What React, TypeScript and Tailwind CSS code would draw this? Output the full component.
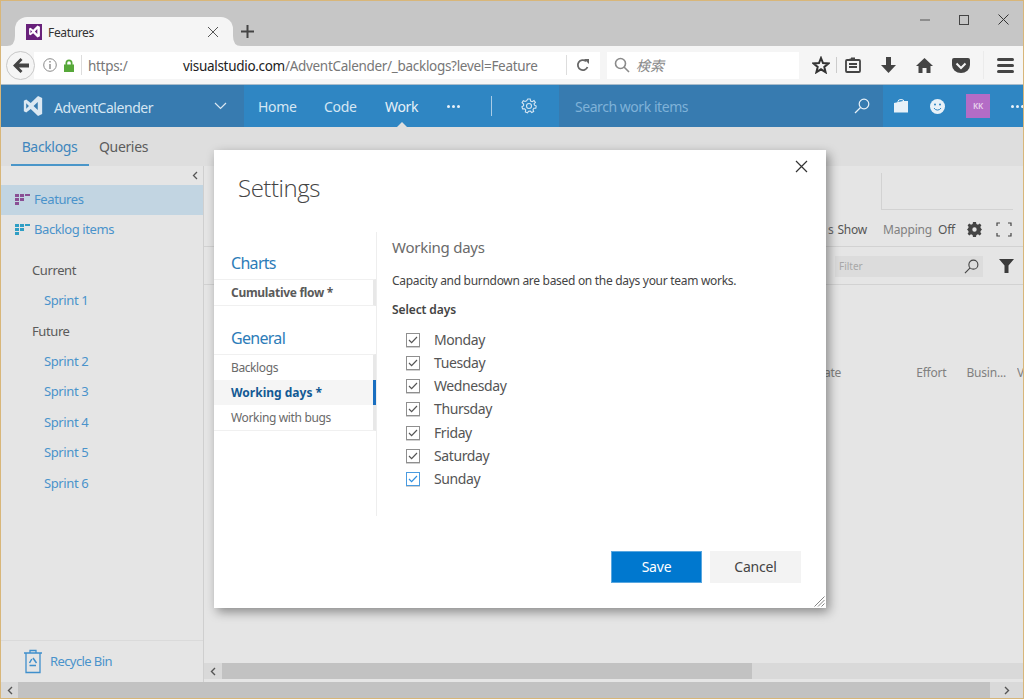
import React from "react";

const VsLogo = ({ size, color }: { size: number; color: string }) => (
  <svg width={size} height={size} viewBox="0 0 24 24" fill={color} className="shrink-0">
    <path d="M17.5 1 L22 3.2 V20.8 L17.5 23 L9.5 15.2 L4.6 19 L2 17.7 V6.3 L4.6 5 L9.5 8.8 Z M17.2 7.6 L12.6 12 L17.2 16.4 Z M4.6 9 V15 L7.6 12 Z" fillRule="evenodd" />
  </svg>
);

const GridIcon = ({ c1 }: { c1: string }) => (
  <svg width="15" height="12" viewBox="0 0 15 12" fill={c1} className="shrink-0">
    <rect x="0" y="0" width="4" height="3" />
    <rect x="5" y="0" width="4" height="3" />
    <rect x="10" y="0" width="5" height="2" />
    <rect x="0" y="4" width="4" height="3" />
    <rect x="5" y="4" width="4" height="3" />
    <rect x="0" y="8" width="4" height="3" />
  </svg>
);

const Mag = ({ size, color }: { size: number; color: string }) => (
  <svg width={size} height={size} viewBox="0 0 16 16" fill="none" stroke={color} strokeWidth="1.2">
    <circle cx="10" cy="6" r="4.8" />
    <path d="M6.5 9.5 L1 15" />
  </svg>
);

const Check = ({ focus }: { focus?: boolean }) => (
  <span className={`flex h-[14px] w-[14px] shrink-0 items-center justify-center border ${focus ? "border-[#4a9be0]" : "border-[#8f8f8f]"} shadow-[0_1px_0_#d0d0d0]`}>
    <svg width="10" height="8" viewBox="0 0 10 8" fill="none" stroke={focus ? "#2f8fe0" : "#555555"} strokeWidth="1.2">
      <path d="M1 4 L3.6 6.6 L9 1" />
    </svg>
  </span>
);

const days = ["Monday", "Tuesday", "Wednesday", "Thursday", "Friday", "Saturday", "Sunday"];
const sprints = ["Sprint 2", "Sprint 3", "Sprint 4", "Sprint 5", "Sprint 6"];

export default function App() {
  return (
    <div
      className="relative flex h-[699px] w-[1024px] flex-col overflow-hidden border border-[#d8b679] bg-[#e5e5e5] text-[#555555]"
      style={{ fontFamily: '"Noto Sans", "Noto Sans CJK JP", sans-serif' }}
    >
      {/* Browser title strip */}
      <div className="flex h-[45px] shrink-0 items-end bg-[#c6c6c6] pl-[14px]">
        <div className="relative flex h-[29px] w-[218px] items-center rounded-t-[12px] bg-[#f5f5f5] pl-[11px] pr-[14px]">
          <svg className="absolute -left-[8px] bottom-0" width="8" height="10" viewBox="0 0 8 10" fill="#f5f5f5">
            <path d="M0 10 Q8 10 8 0 V10 Z" />
          </svg>
          <svg className="absolute -right-[8px] bottom-0" width="8" height="10" viewBox="0 0 8 10" fill="#f5f5f5">
            <path d="M8 10 Q0 10 0 0 V10 Z" />
          </svg>
          <span className="flex h-[16px] w-[16px] items-center justify-center bg-[#68217a]">
            <VsLogo size={13} color="#ffffff" />
          </span>
          <span className="ml-[6px] flex-1 pt-[2px] text-[12px] tracking-[-0.35px] text-[#333333]">Features</span>
          <svg width="12" height="12" viewBox="0 0 12 12" stroke="#555555" strokeWidth="1">
            <path d="M1 1 L11 11 M11 1 L1 11" />
          </svg>
        </div>
        <svg className="mb-[8px] ml-[8px]" width="13" height="13" viewBox="0 0 13 13" stroke="#444444" strokeWidth="2">
          <path d="M6.5 0 V13 M0 6.5 H13" />
        </svg>
        <div className="mb-[21px] ml-auto flex items-center gap-[29px] pr-[14px]">
          <svg width="10" height="10" viewBox="0 0 10 10" stroke="#555555" strokeWidth="1"><path d="M0 5 H10" /></svg>
          <svg width="10" height="10" viewBox="0 0 10 10" fill="none" stroke="#444444" strokeWidth="1"><rect x="0.5" y="0.5" width="9" height="9" /></svg>
          <svg width="11" height="11" viewBox="0 0 11 11" stroke="#333333" strokeWidth="1"><path d="M0.5 0.5 L10.5 10.5 M10.5 0.5 L0.5 10.5" /></svg>
        </div>
      </div>

      {/* Browser toolbar */}
      <div className="flex h-[39px] shrink-0 items-center border-b border-[#a9bccb] bg-[#f5f5f5] pl-[5px]">
        <div className="z-10 flex h-[29px] w-[29px] shrink-0 items-center justify-center rounded-full border border-[#c8c8c8] bg-[#f5f5f5]">
          <svg width="16" height="15" viewBox="0 0 16 15" fill="#444444">
            <path d="M7.5 0 L9.5 2 L6 5.5 H16 V9.5 H6 L9.5 13 L7.5 15 L0 7.5 Z" />
          </svg>
        </div>
        <div className="-ml-[1px] flex h-[27px] w-[566px] shrink-0 items-center overflow-hidden bg-white text-[13.5px] tracking-[-0.3px]">
          <svg className="ml-[9px] shrink-0" width="14" height="14" viewBox="0 0 14 14" fill="none" stroke="#8a8a8a" strokeWidth="1">
            <circle cx="7" cy="7" r="6.3" />
            <path d="M7 6 V11 M7 3 V4.6" strokeWidth="1.4" />
          </svg>
          <svg className="ml-[6px] shrink-0" width="12" height="13" viewBox="0 0 12 13" fill="#57a83a">
            <path d="M1 5.5 H2.5 V4 A3.5 3.5 0 0 1 9.5 4 V5.5 H11 V13 H1 Z M4.2 5.5 H7.8 V4 A1.8 1.8 0 0 0 4.2 4 Z" fillRule="evenodd" />
          </svg>
          <span className="ml-[6px] h-[20px] w-px shrink-0 bg-[#dddddd]" />
          <span className="ml-[6px] w-[95px] shrink-0 pt-[2px] text-[#777777]">https:/</span>
          <span className="shrink-0 whitespace-nowrap pt-[2px] text-[#222222]">visualstudio.com</span>
          <span className="w-[257px] shrink-0 overflow-hidden whitespace-nowrap pt-[2px] text-[#777777]">/AdventCalender/_backlogs?level=Feature</span>
          <span className="ml-[24px] h-[20px] w-px shrink-0 bg-[#dddddd]" />
          <svg className="ml-[9px] shrink-0" width="14" height="14" viewBox="0 0 14 14" fill="none" stroke="#666666" strokeWidth="1.8">
            <path d="M11.5 9 A5 5 0 1 1 10 3.2" />
            <path d="M8 1 H13 V6 Z" fill="#666666" stroke="none" />
          </svg>
        </div>
        <div className="ml-[7px] flex h-[27px] w-[192px] shrink-0 items-center bg-white pl-[7px]">
          <svg width="16" height="16" viewBox="0 0 16 16" fill="none" stroke="#8a8a8a" strokeWidth="1.6">
            <circle cx="6.5" cy="6.5" r="5" />
            <path d="M10 10 L15 15" />
          </svg>
          <span className="ml-[6px] pt-[1px] text-[14px] italic text-[#888888]">検索</span>
        </div>
        <div className="ml-[13px] flex items-center">
          <svg width="18" height="18" viewBox="0 0 18 18" fill="none" stroke="#333333" strokeWidth="2">
            <path d="M9 2 L11 7 L16.5 7.4 L12.3 10.9 L13.6 16.2 L9 13.3 L4.4 16.2 L5.7 10.9 L1.5 7.4 L7 7 Z" />
          </svg>
          <span className="ml-[6px] h-[16px] w-px bg-[#cccccc]" />
          <svg className="ml-[8px]" width="16" height="16" viewBox="0 0 16 16" fill="none" stroke="#444444" strokeWidth="1.8">
            <rect x="1" y="3" width="14" height="12" rx="1" />
            <path d="M4 7 H12 M4 10 H12 M5.5 3 V1.5 M6 1.5 H10" />
          </svg>
          <svg className="ml-[20px]" width="15" height="16" viewBox="0 0 15 16" fill="#444444">
            <path d="M5 0 H10 V8 H15 L7.5 16 L0 8 H5 Z" />
          </svg>
          <svg className="ml-[20px]" width="17" height="15" viewBox="0 0 17 15" fill="#444444">
            <path d="M8.5 0 L17 8 H14.5 V15 H10.5 V10 H6.5 V15 H2.5 V8 H0 Z" />
          </svg>
          <svg className="ml-[19px]" width="18" height="15" viewBox="0 0 18 15" fill="#444444">
            <path d="M2 0 H16 A2 2 0 0 1 18 2 V7 A9 8 0 0 1 0 7 V2 A2 2 0 0 1 2 0 Z" />
            <path d="M4.5 5.5 L9 10 L13.5 5.5" fill="none" stroke="#f5f5f5" strokeWidth="2" />
          </svg>
          <span className="ml-[13px] h-[28px] w-px bg-[#ebebeb]" />
          <div className="ml-[13px] flex w-[17px] flex-col gap-[3px]">
            <span className="h-[3px] rounded-full bg-[#444444]" />
            <span className="h-[3px] rounded-full bg-[#444444]" />
            <span className="h-[3px] rounded-full bg-[#444444]" />
          </div>
        </div>
      </div>

      {/* App nav */}
      <div className="flex h-[42px] shrink-0 items-center bg-[#2f86c3] text-[14px] tracking-[-0.3px] text-[#d5e6f3]">
        <div className="flex h-full w-[243px] shrink-0 items-center bg-[#377bb0] pl-[21px] pr-[17px]">
          <VsLogo size={22} color="#dbe8f2" />
          <span className="ml-[10px] flex-1 pt-[2px] text-[14px] tracking-[-0.45px]">AdventCalender</span>
          <svg width="13" height="8" viewBox="0 0 13 8" fill="none" stroke="#dbe8f2" strokeWidth="1.2"><path d="M1 1 L6.5 6.5 L12 1" /></svg>
        </div>
        <span className="ml-[14px] w-[38px] shrink-0 pt-[1px]">Home</span>
        <span className="ml-[28px] w-[33px] shrink-0 pt-[1px]">Code</span>
        <span className="relative ml-[28px] w-[34px] shrink-0 pt-[1px] text-[#e8f1f8]">
          Work
          <span className="absolute left-[12px] top-[27px] h-0 w-0 border-x-[5px] border-b-[5px] border-x-transparent border-b-[#dedede]" />
        </span>
        <span className="ml-[28px] flex w-[13px] shrink-0 gap-[2px]">
          <i className="h-[3px] w-[3px] rounded-full bg-[#e8f1f8]" />
          <i className="h-[3px] w-[3px] rounded-full bg-[#e8f1f8]" />
          <i className="h-[3px] w-[3px] rounded-full bg-[#e8f1f8]" />
        </span>
        <span className="ml-[31px] h-[20px] w-px shrink-0 bg-[#a9cce6]" />
        <svg className="ml-[29px] shrink-0" width="16" height="16" viewBox="0 0 16 16" fill="none" stroke="#d5e6f3" strokeWidth="1.1">
          <circle cx="8" cy="8" r="2.5" />
          <path d="M6.8 1 H9.2 L9.6 3 L11.2 3.7 L13 2.6 L14.4 4.4 L13 5.8 L13.5 7.2 L15.2 8 L14.8 10.2 L12.9 10.2 L12 11.7 L12.7 13.6 L10.7 14.6 L9.4 13.1 L7.6 13.2 L6.5 14.8 L4.3 13.9 L4.7 12 L3.6 10.8 L1.6 10.9 L0.9 8.7 L2.6 7.7 L2.6 6 L1.1 4.7 L2.3 2.8 L4.1 3.5 L5.6 2.8 Z" />
        </svg>
        <div className="ml-[22px] flex h-full w-[324px] shrink-0 items-center justify-between bg-[#377bb0] pl-[16px] pr-[13px]">
          <span className="pt-[1px] tracking-[-0.45px] text-[#7fb2d8]">Search work items</span>
          <Mag size={16} color="#e8f1f8" />
        </div>
        <svg className="ml-[11px] shrink-0" width="14" height="14" viewBox="0 0 14 14" fill="#e8f1f8">
          <path d="M0 4 L9 2 H14 V13.5 H0 Z" />
          <path d="M4 4 V2.5 A3 2 0 0 1 10 2.5 V4" fill="none" stroke="#e8f1f8" />
        </svg>
        <svg className="ml-[22px] shrink-0" width="15" height="15" viewBox="0 0 15 15">
          <circle cx="7.5" cy="7.5" r="7.5" fill="#e8f1f8" />
          <circle cx="5" cy="5.5" r="1" fill="#2f86c3" />
          <circle cx="10" cy="5.5" r="1" fill="#2f86c3" />
          <path d="M4 9 A4 4 0 0 0 11 9" fill="none" stroke="#2f86c3" />
        </svg>
        <span className="ml-[21px] flex h-[24px] w-[24px] shrink-0 items-center justify-center bg-[#b46cc6] text-[8px] font-semibold text-[#e8d5ec]">KK</span>
        <span className="ml-[21px] flex shrink-0 gap-[2px]">
          <i className="h-[3px] w-[3px] rounded-full bg-[#e8f1f8]" />
          <i className="h-[3px] w-[3px] rounded-full bg-[#e8f1f8]" />
          <i className="h-[3px] w-[3px] rounded-full bg-[#e8f1f8]" />
        </span>
      </div>

      {/* Sub nav */}
      <div className="flex h-[39px] shrink-0 items-stretch bg-[#dedede] pl-[10px] text-[14px] tracking-[-0.35px]">
        <span className="flex w-[78px] items-center justify-center border-b-[2px] border-[#4a96c9] pr-[1px] pt-[1px] text-[#3f86bd]">Backlogs</span>
        <span className="ml-[10px] flex items-center text-[#5c5c5c]">Queries</span>
      </div>

      {/* Main */}
      <div className="flex min-h-0 flex-1">
        <aside className="flex w-[203px] shrink-0 flex-col border-r border-[#cfcfcf] text-[13px] tracking-[-0.4px] text-[#4a93cb]">
          <div className="flex h-[19px] shrink-0 items-center justify-end pr-[5px]">
            <svg width="6" height="9" viewBox="0 0 6 9" fill="none" stroke="#555555" strokeWidth="1.3"><path d="M5 1 L1.5 4.5 L5 8" /></svg>
          </div>
          <div className="flex h-[30px] items-center gap-[4px] bg-[#c2d5e2] pl-[14px]">
            <GridIcon c1="#8a4f94" />
            <span>Features</span>
          </div>
          <div className="flex h-[30px] items-center gap-[4px] pl-[14px]">
            <GridIcon c1="#2f9ec4" />
            <span>Backlog items</span>
          </div>
          <div className="mt-[10px] flex flex-col pt-[1px]">
            <span className="flex h-[29.5px] items-center pl-[31px] text-[#5a5a5a]">Current</span>
            <span className="flex h-[30.5px] items-center pl-[43px]">Sprint 1</span>
            <span className="flex h-[30.5px] items-center pl-[31px] text-[#5a5a5a]">Future</span>
            {sprints.map((s) => (
              <span key={s} className="flex h-[30.4px] items-center pl-[43px]">{s}</span>
            ))}
          </div>
          <div className="mt-auto flex h-[42px] items-center border-t border-[#dadada] pl-[22px]">
            <svg width="20" height="25" viewBox="0 0 20 25" fill="none" stroke="#3f8fcc" strokeWidth="1.3">
              <path d="M1 4 H19 M7 4 V1.5 H13 V4 M3 4 V23.5 H17 V4" />
              <path d="M10 9 L13.5 14 M8.8 10 L6.5 14 M6.5 16.5 H13" strokeWidth="1.5" />
            </svg>
            <span className="ml-[7px] pt-[1px] tracking-[-0.6px]">Recycle Bin</span>
          </div>
        </aside>

        <section className="flex min-w-0 flex-1 flex-col">
          <div className="flex justify-end pr-[10px] pt-[7px]">
            <div className="h-[37px] w-[132px] border-b-[1px] border-l-[1px] border-[#d2d2d2]" />
          </div>
          <div className="flex h-[37px] items-center justify-end border-b border-[#d2d2d2] pr-[11px] pt-[3px] text-[12px] tracking-[-0.2px]">
            <span className="text-[#6a6a6a]">s</span>
            <span className="ml-[4px]">Show</span>
            <span className="ml-[16px] text-[#808080]">Mapping</span>
            <span className="ml-[6px]">Off</span>
            <svg className="ml-[12px]" width="15" height="15" viewBox="0 0 15 15" fill="#444444">
              <path d="M6 0 H9 L9.4 2 L11 2.7 L12.7 1.6 L14.4 3.3 L13.3 5 L14 6.6 L15 7.5 L14 8.4 L13.3 10 L14.4 11.7 L12.7 13.4 L11 12.3 L9.4 13 L9 15 H6 L5.6 13 L4 12.3 L2.3 13.4 L0.6 11.7 L1.7 10 L1 8.4 L0 7.5 L1 6.6 L1.7 5 L0.6 3.3 L2.3 1.6 L4 2.7 L5.6 2 Z M7.5 5.3 A2.2 2.2 0 1 0 7.5 9.7 A2.2 2.2 0 1 0 7.5 5.3 Z" fillRule="evenodd" />
            </svg>
            <svg className="ml-[14px]" width="16" height="15" viewBox="0 0 16 15" fill="none" stroke="#444444" strokeWidth="1.2">
              <path d="M1 4 V1 H4 M12 1 H15 V4 M15 11 V14 H12 M4 14 H1 V11" />
            </svg>
          </div>
          <div className="flex h-[38px] items-center justify-end border-b border-[#d2d2d2] pr-[9px] pt-[1px]">
            <div className="flex h-[21px] w-[148px] items-center justify-between bg-[#dcdcdc] pl-[4px] pr-[4px] text-[10px] text-[#a8a8a8]">
              <span>Filter</span>
              <Mag size={15} color="#444444" />
            </div>
            <svg className="ml-[16px]" width="15" height="14" viewBox="0 0 15 14" fill="#3a3a3a">
              <path d="M0 0 H15 L9.5 6.5 V14 H5.5 V6.5 Z" />
            </svg>
          </div>
          <div className="flex justify-end pt-[79px] text-[12px] tracking-[-0.2px] text-[#808080]">
            <span className="mr-[75px]">ate</span>
            <span className="mr-[20px]">Effort</span>
            <span className="mr-[11px]">Busin...</span>
            <span className="h-[17px] w-[6px] overflow-hidden">V</span>
          </div>
          <div className="mt-auto flex h-[16px] items-stretch bg-[#d9d9d9]">
            <span className="flex w-[18px] items-center justify-center">
              <svg width="6" height="9" viewBox="0 0 6 9" fill="none" stroke="#555555" strokeWidth="1.4"><path d="M5 1 L1.5 4.5 L5 8" /></svg>
            </span>
            <span className="w-[530px] bg-[#c2c2c2]" />
          </div>
          <div className="h-[3px] shrink-0" />
        </section>
      </div>

      {/* Window scrollbar */}
      <div className="flex h-[16px] shrink-0 items-stretch bg-[#d9d9d9]">
        <span className="flex w-[17px] items-center justify-center">
          <svg width="6" height="9" viewBox="0 0 6 9" fill="none" stroke="#555555" strokeWidth="1.4"><path d="M5 1 L1.5 4.5 L5 8" /></svg>
        </span>
        <span className="w-[972px] bg-[#c2c2c2]" />
        <span className="flex flex-1 items-center justify-center">
          <svg width="6" height="9" viewBox="0 0 6 9" fill="none" stroke="#555555" strokeWidth="1.4"><path d="M1 1 L4.5 4.5 L1 8" /></svg>
        </span>
      </div>

      {/* Dialog */}
      <div className="absolute left-[213px] top-[149px] flex h-[458px] w-[612px] flex-col bg-white shadow-[3px_4px_10px_rgba(0,0,0,0.4)]">
        <div className="flex items-start justify-between pl-[24px] pr-[18px]">
          <h1 className="pt-[20px] text-[24px] font-light leading-[36px] tracking-[-0.45px] text-[#444444]" style={{ fontFamily: '"Open Sans", sans-serif' }}>Settings</h1>
          <svg className="mt-[10px]" width="13" height="13" viewBox="0 0 13 13" stroke="#333333" strokeWidth="1.2">
            <path d="M1 1 L12 12 M12 1 L1 12" />
          </svg>
        </div>
        <div className="mt-[26px] flex h-[284px]">
          <nav className="w-[163px] shrink-0 border-r border-[#eeeeee] pt-[20px] text-[12px]">
            <h2 className="pl-[17px] text-[16px] leading-[22px] tracking-[-0.7px] text-[#2c7cb8]">Charts</h2>
            <div className="mt-[5px] flex h-[27px] items-center border-y border-[#f0f0f0] border-r-[3px] border-r-[#e8e8e8] pl-[17px] font-bold tracking-[-0.3px] text-[#5a5a5a]">Cumulative flow *</div>
            <h2 className="mt-[21px] pl-[17px] text-[16px] leading-[22px] tracking-[-0.7px] text-[#2c7cb8]">General</h2>
            <div className="mt-[5px] flex h-[26px] items-center border-t border-[#f0f0f0] border-r-[3px] border-r-[#e8e8e8] pl-[17px] tracking-[-0.4px] text-[#6a6a6a]">Backlogs</div>
            <div className="flex h-[25px] items-center border-r-[3px] border-r-[#1a6fc0] bg-[#f5f5f5] pl-[17px] font-bold text-[#135a94]">Working days *</div>
            <div className="flex h-[26px] items-center border-b border-[#f0f0f0] border-r-[3px] border-r-[#e8e8e8] pl-[17px] tracking-[-0.35px] text-[#6a6a6a]">Working with bugs</div>
          </nav>
          <div className="min-w-0 flex-1 pl-[15px]">
            <h3 className="text-[15px] leading-[30px] tracking-[-0.25px] text-[#6a6a6a]">Working days</h3>
            <p className="mt-[10px] text-[12px] leading-[18px] tracking-[-0.3px] text-[#444444]">Capacity and burndown are based on the days your team works.</p>
            <p className="mt-[11px] text-[12px] font-semibold leading-[18px] tracking-[-0.1px] text-[#444444]">Select days</p>
            <ul className="mt-[9px] flex flex-col pl-[14px] text-[14px] tracking-[-0.4px] text-[#555555]">
              {days.map((d, i) => (
                <li key={d} className="flex h-[23.25px] items-center gap-[14px]">
                  <Check focus={i === 6} />
                  <span className="-mt-[1px]">{d}</span>
                </li>
              ))}
            </ul>
          </div>
        </div>
        <div className="mt-[35px] flex justify-end gap-[8px] pr-[25px]">
          <button className="h-[32px] w-[91px] border border-[#59a7e0] bg-[#0078cf] pb-[1px] text-[14px] tracking-[-0.2px] text-white">Save</button>
          <button className="h-[32px] w-[91px] bg-[#f3f3f3] pb-[1px] text-[14px] tracking-[-0.2px] text-[#444444]">Cancel</button>
        </div>
        <svg className="absolute bottom-[1px] right-[1px]" width="11" height="11" viewBox="0 0 11 11" stroke="#777777" strokeWidth="0.9">
          <path d="M0.5 10.5 L10.5 0.5 M4 10.5 L10.5 4 M7.5 10.5 L10.5 7.5" />
        </svg>
      </div>
    </div>
  );
}
